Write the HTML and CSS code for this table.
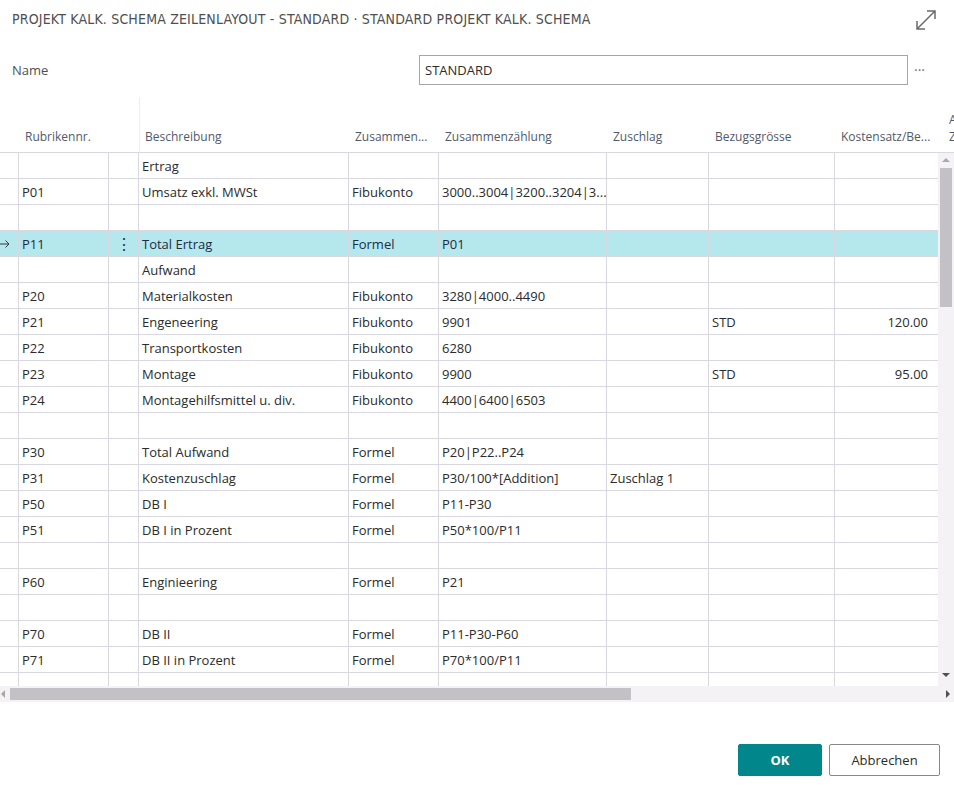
FILE: index.html
```html
<!DOCTYPE html>
<html lang="de">
<head>
<meta charset="utf-8">
<title>Projekt Kalk. Schema Zeilenlayout</title>
<link rel="stylesheet" href="styles.css">
</head>
<body>
<div class="dialog">
  <div class="titlebar">
    <h1 class="title">PROJEKT KALK. SCHEMA ZEILENLAYOUT - STANDARD · STANDARD PROJEKT KALK. SCHEMA</h1>
    <svg class="expand" width="24" height="24" viewBox="0 0 24 24" aria-hidden="true">
      <path d="M3 21 L21 3 M13 3 H21 V11 M3 13 V21 H11" fill="none" stroke="#6b6b6b" stroke-width="1.5"/>
    </svg>
  </div>

  <div class="field">
    <label class="field-label">Name</label>
    <div class="field-input">STANDARD</div>
    <span class="field-more">···</span>
  </div>

  <div class="grid">
    <div class="grid-head row">
      <div class="c"></div>
      <div class="c">Rubrikennr.</div>
      <div class="c"></div>
      <div class="c frozen">Beschreibung</div>
      <div class="c">Zusammen...</div>
      <div class="c">Zusammenzählung</div>
      <div class="c">Zuschlag</div>
      <div class="c">Bezugsgrösse</div>
      <div class="c">Kostensatz/Be...</div>
      <div class="c two">A<br>Z</div>
    </div>
    <div class="grid-body">
      <div class="row"><div class="c"></div><div class="c"></div><div class="c"></div><div class="c">Ertrag</div><div class="c"></div><div class="c"></div><div class="c"></div><div class="c"></div><div class="c"></div><div class="c"></div></div>
      <div class="row"><div class="c"></div><div class="c">P01</div><div class="c"></div><div class="c">Umsatz exkl. MWSt</div><div class="c">Fibukonto</div><div class="c">3000..3004|3200..3204|3...</div><div class="c"></div><div class="c"></div><div class="c"></div><div class="c"></div></div>
      <div class="row"><div class="c"></div><div class="c"></div><div class="c"></div><div class="c"></div><div class="c"></div><div class="c"></div><div class="c"></div><div class="c"></div><div class="c"></div><div class="c"></div></div>
      <div class="row selected"><div class="c arrow"><svg width="10" height="8" viewBox="0 0 10 8" aria-hidden="true"><path d="M0 4 H9 M5.5 0.5 L9 4 L5.5 7.5" fill="none" stroke="#3a3a3a" stroke-width="1"/></svg></div><div class="c">P11</div><div class="c dots">⋮</div><div class="c">Total Ertrag</div><div class="c">Formel</div><div class="c">P01</div><div class="c"></div><div class="c"></div><div class="c"></div><div class="c"></div></div>
      <div class="row"><div class="c"></div><div class="c"></div><div class="c"></div><div class="c">Aufwand</div><div class="c"></div><div class="c"></div><div class="c"></div><div class="c"></div><div class="c"></div><div class="c"></div></div>
      <div class="row"><div class="c"></div><div class="c">P20</div><div class="c"></div><div class="c">Materialkosten</div><div class="c">Fibukonto</div><div class="c">3280|4000..4490</div><div class="c"></div><div class="c"></div><div class="c"></div><div class="c"></div></div>
      <div class="row"><div class="c"></div><div class="c">P21</div><div class="c"></div><div class="c">Engeneering</div><div class="c">Fibukonto</div><div class="c">9901</div><div class="c"></div><div class="c">STD</div><div class="c num">120.00</div><div class="c"></div></div>
      <div class="row"><div class="c"></div><div class="c">P22</div><div class="c"></div><div class="c">Transportkosten</div><div class="c">Fibukonto</div><div class="c">6280</div><div class="c"></div><div class="c"></div><div class="c"></div><div class="c"></div></div>
      <div class="row"><div class="c"></div><div class="c">P23</div><div class="c"></div><div class="c">Montage</div><div class="c">Fibukonto</div><div class="c">9900</div><div class="c"></div><div class="c">STD</div><div class="c num">95.00</div><div class="c"></div></div>
      <div class="row"><div class="c"></div><div class="c">P24</div><div class="c"></div><div class="c">Montagehilfsmittel u. div.</div><div class="c">Fibukonto</div><div class="c">4400|6400|6503</div><div class="c"></div><div class="c"></div><div class="c"></div><div class="c"></div></div>
      <div class="row"><div class="c"></div><div class="c"></div><div class="c"></div><div class="c"></div><div class="c"></div><div class="c"></div><div class="c"></div><div class="c"></div><div class="c"></div><div class="c"></div></div>
      <div class="row"><div class="c"></div><div class="c">P30</div><div class="c"></div><div class="c">Total Aufwand</div><div class="c">Formel</div><div class="c">P20|P22..P24</div><div class="c"></div><div class="c"></div><div class="c"></div><div class="c"></div></div>
      <div class="row"><div class="c"></div><div class="c">P31</div><div class="c"></div><div class="c">Kostenzuschlag</div><div class="c">Formel</div><div class="c">P30/100*[Addition]</div><div class="c">Zuschlag 1</div><div class="c"></div><div class="c"></div><div class="c"></div></div>
      <div class="row"><div class="c"></div><div class="c">P50</div><div class="c"></div><div class="c">DB I</div><div class="c">Formel</div><div class="c">P11-P30</div><div class="c"></div><div class="c"></div><div class="c"></div><div class="c"></div></div>
      <div class="row"><div class="c"></div><div class="c">P51</div><div class="c"></div><div class="c">DB I in Prozent</div><div class="c">Formel</div><div class="c">P50*100/P11</div><div class="c"></div><div class="c"></div><div class="c"></div><div class="c"></div></div>
      <div class="row"><div class="c"></div><div class="c"></div><div class="c"></div><div class="c"></div><div class="c"></div><div class="c"></div><div class="c"></div><div class="c"></div><div class="c"></div><div class="c"></div></div>
      <div class="row"><div class="c"></div><div class="c">P60</div><div class="c"></div><div class="c">Enginieering</div><div class="c">Formel</div><div class="c">P21</div><div class="c"></div><div class="c"></div><div class="c"></div><div class="c"></div></div>
      <div class="row"><div class="c"></div><div class="c"></div><div class="c"></div><div class="c"></div><div class="c"></div><div class="c"></div><div class="c"></div><div class="c"></div><div class="c"></div><div class="c"></div></div>
      <div class="row"><div class="c"></div><div class="c">P70</div><div class="c"></div><div class="c">DB II</div><div class="c">Formel</div><div class="c">P11-P30-P60</div><div class="c"></div><div class="c"></div><div class="c"></div><div class="c"></div></div>
      <div class="row"><div class="c"></div><div class="c">P71</div><div class="c"></div><div class="c">DB II in Prozent</div><div class="c">Formel</div><div class="c">P70*100/P11</div><div class="c"></div><div class="c"></div><div class="c"></div><div class="c"></div></div>
      <div class="row"><div class="c"></div><div class="c"></div><div class="c"></div><div class="c"></div><div class="c"></div><div class="c"></div><div class="c"></div><div class="c"></div><div class="c"></div><div class="c"></div></div>

      <div class="vscroll">
        <span class="vs-up"></span>
        <span class="vs-thumb"></span>
        <span class="vs-down"></span>
      </div>
    </div>
    <div class="hscroll">
      <span class="hs-left"></span>
      <span class="hs-thumb"></span>
      <span class="hs-right"></span>
    </div>
  </div>

  <div class="actions">
    <button class="btn btn-primary">OK</button>
    <button class="btn btn-secondary">Abbrechen</button>
  </div>
</div>
</body>
</html>
```

FILE: styles.css
```css
* { box-sizing: border-box; }

html, body {
  margin: 0;
  padding: 0;
  background: #ffffff;
}

body {
  width: 954px;
  height: 787px;
  overflow: hidden;
  font-family: "Open Sans", "Noto Sans", sans-serif;
  font-size: 13px;
  color: #2b2b2b;
}

.dialog {
  display: flex;
  flex-direction: column;
  height: 787px;
}

/* title */
.titlebar {
  display: flex;
  align-items: center;
  justify-content: space-between;
  height: 38px;
  padding: 0 16px 0 12px;
}

.title {
  margin: 0;
  font-family: "DejaVu Sans Condensed", "DejaVu Sans", sans-serif;
  font-stretch: condensed;
  font-size: 14px;
  font-weight: normal;
  color: #4f4f4f;
  letter-spacing: 0.18px;
}

.expand { display: block; margin-top: 2px; }

/* name field */
.field {
  display: flex;
  align-items: center;
  height: 31px;
  margin-top: 16px;
  padding-left: 12px;
}

.field-label {
  width: 407px;
  color: #505050;
}

.field-input {
  width: 489px;
  height: 30px;
  border: 1px solid #a6a6a6;
  padding: 0 5px;
  line-height: 28px;
  color: #2b2b2b;
}

.field-more {
  margin-left: 6px;
  color: #707070;
  font-size: 14px;
  letter-spacing: 0;
}

/* grid */
.grid {
  margin-top: 12px;
  width: 954px;
  overflow: hidden;
}

.row {
  display: grid;
  grid-template-columns: 19px 90px 30px 210px 90px 168px 102px 126px 104px 120px;
  width: 1059px;
}

.grid-head {
  height: 56px;
  border-bottom: 1px solid #d9d7df;
}

.grid-head .c {
  display: flex;
  align-items: flex-end;
  padding: 0 0 7px 6px;
  font-size: 12px;
  color: #51596a;
  white-space: nowrap;
}

.grid-head .c.frozen {
  border-left: 1px solid #eeedf1;
  padding-left: 5px;
}

.grid-head .c.two {
  line-height: 17px;
  padding-left: 10px;
}

.grid-body {
  position: relative;
  height: 533px;
  overflow: hidden;
}

.grid-body .row {
  height: 26px;
}

.grid-body .c {
  border-right: 1px solid #d9d7df;
  border-bottom: 1px solid #d9d7df;
  padding: 1px 3px 0;
  line-height: 24px;
  white-space: nowrap;
  overflow: hidden;
}

.grid-body .c.num { text-align: right; padding-right: 10px; }

.row.selected .c { background: #b5e8ed; color: #1f2a44; }
.row.selected .c.arrow {
  display: flex;
  align-items: center;
  padding: 0;
}
.row.selected .c.arrow svg { display: block; }
.row.selected .c.dots { text-align: center; font-size: 16px; color: #333; }

/* vertical scrollbar (overlays the grid body) */
.vscroll {
  position: absolute;
  top: 0;
  right: 0;
  width: 16px;
  height: 533px;
  background: #f5f2f5;
}

.vs-up, .vs-down, .vs-thumb { position: absolute; display: block; }

.vs-up {
  top: 5px; left: 4px;
  border-left: 4px solid transparent;
  border-right: 4px solid transparent;
  border-bottom: 4px solid #a9a9a9;
}

.vs-thumb {
  top: 15px; left: 2px;
  width: 12px; height: 139px;
  background: #c3c1c6;
}

.vs-down {
  bottom: 9px; left: 4px;
  border-left: 4px solid transparent;
  border-right: 4px solid transparent;
  border-top: 4px solid #505050;
}

/* horizontal scrollbar */
.hscroll {
  position: relative;
  height: 16px;
  background: #f5f2f5;
}

.hs-left, .hs-right, .hs-thumb { position: absolute; display: block; }

.hs-left {
  left: 1px; top: 4px;
  border-top: 4px solid transparent;
  border-bottom: 4px solid transparent;
  border-right: 4px solid #a9a9a9;
}

.hs-thumb {
  left: 10px; top: 2px;
  width: 621px; height: 12px;
  background: #c3c1c6;
}

.hs-right {
  right: 4px; top: 4px;
  border-top: 4px solid transparent;
  border-bottom: 4px solid transparent;
  border-left: 4px solid #505050;
}

/* buttons */
.actions {
  display: flex;
  justify-content: flex-end;
  gap: 7px;
  margin-top: 42px;
  padding-right: 14px;
}

.btn {
  height: 32px;
  font-family: "Open Sans", "Noto Sans", sans-serif;
  font-size: 13px;
  border-radius: 2px;
  cursor: pointer;
}

.btn-primary {
  width: 84px;
  background: #00868b;
  border: 1px solid #00868b;
  color: #ffffff;
  font-weight: bold;
}

.btn-secondary {
  width: 111px;
  background: #ffffff;
  border: 1px solid #8a8886;
  color: #2b2b2b;
}
```
